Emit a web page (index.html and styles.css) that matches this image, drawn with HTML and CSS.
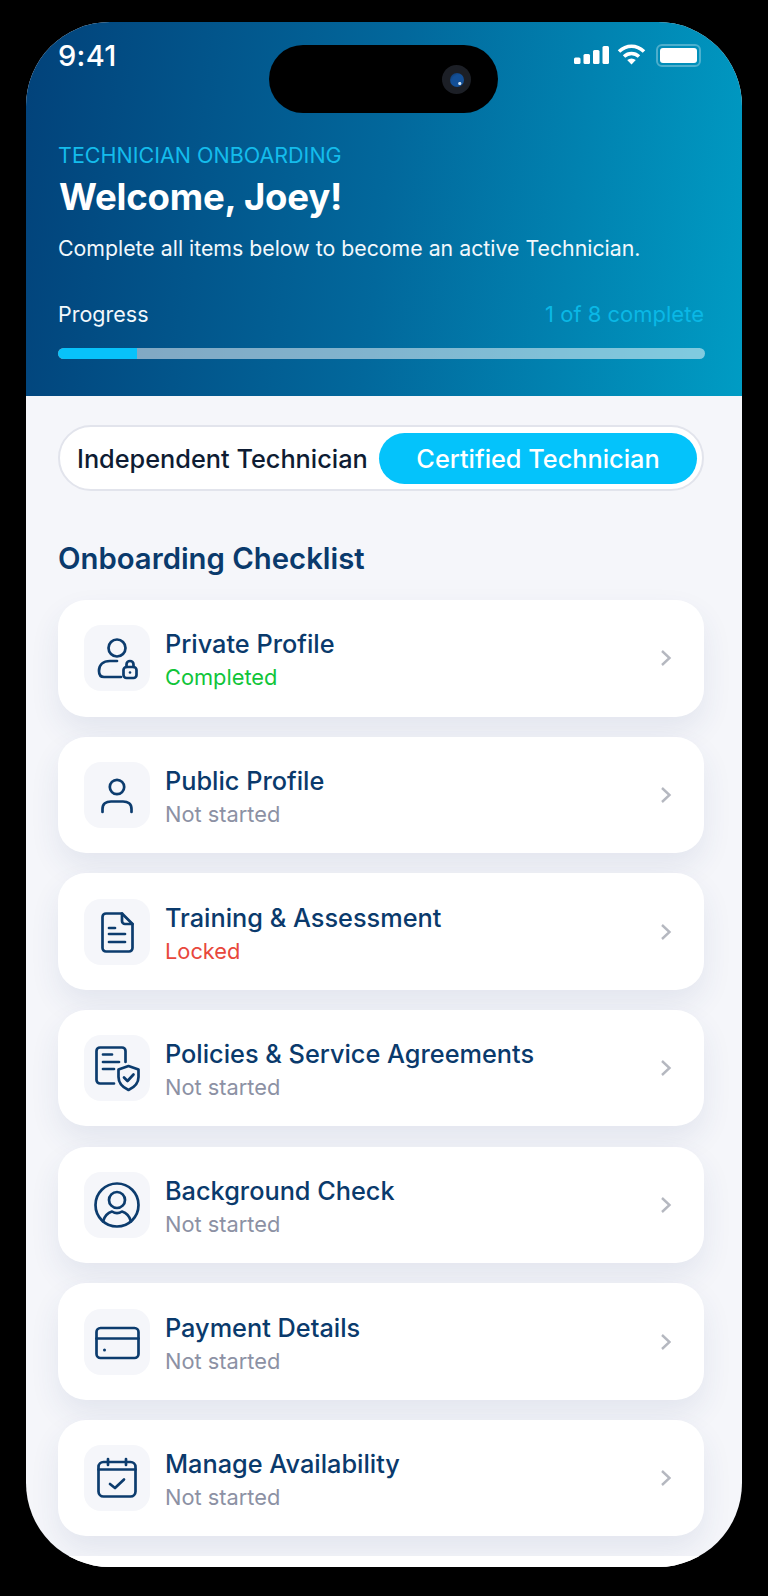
FILE: index.html
```html
<!DOCTYPE html>
<html lang="en">
<head>
<meta charset="utf-8">
<title>Technician Onboarding</title>
<link rel="stylesheet" href="styles.css">
</head>
<body>
<div class="phone">
  <header class="hero">
    <div class="status">
      <span class="time">9:41</span>
      <div class="status-icons">
        <svg class="sig" width="35" height="18" viewBox="0 0 35 18"><rect x="0" y="11.5" width="6.5" height="6.5" rx="1.5"/><rect x="9.5" y="8" width="6.5" height="10" rx="1.5"/><rect x="19" y="4" width="6.5" height="14" rx="1.5"/><rect x="28.5" y="0" width="6.5" height="18" rx="1.5"/></svg>
        <svg class="wifi" width="29" height="21" viewBox="0 0 29 21"><path d="M2 7.5C9.5 .5 19.5 .5 27 7.5" /><path d="M7 12.5C11.5 8.5 17.5 8.5 22 12.5"/><path class="wifi-dot" d="M14.5 20.5L10.2 16C13 14 16 14 18.8 16Z"/></svg>
        <div class="battery"><span class="battery-fill"></span></div>
      </div>
    </div>
    <div class="island"><span class="camera"><span class="lens"></span></span></div>
    <p class="eyebrow">TECHNICIAN ONBOARDING</p>
    <h1 class="welcome">Welcome, Joey!</h1>
    <p class="lead">Complete all items below to become an active Technician.</p>
    <div class="progress-row">
      <span>Progress</span>
      <span class="progress-count">1 of 8 complete</span>
    </div>
    <div class="bar"><span class="bar-fill"></span></div>
  </header>

  <main class="body">
    <div class="segment">
      <span class="seg-off">Independent Technician</span>
      <span class="seg-on">Certified Technician</span>
    </div>
    <h2 class="section">Onboarding Checklist</h2>
    <div class="list">
      <article class="card">
        <div class="icon"><svg viewBox="0 0 66 66"><circle cx="33" cy="23" r="8.5"/><path d="M33 36H26C19 36 15 40 15 46Q15 52 20 52H37"/><rect x="39.5" y="42" width="13" height="11" rx="3"/><path d="M42.500 42V39.500a3.500 3.500 0 0 1 7 0V42"/><circle class="solid" cx="46" cy="47.500" r="1.300"/></svg></div>
        <div class="text"><div class="title">Private Profile</div><div class="sub done">Completed</div></div>
        <svg class="chev" viewBox="0 0 12 18"><path d="M2 2l7.500 7-7.500 7"/></svg>
      </article>
      <article class="card">
        <div class="icon"><svg viewBox="0 0 66 66"><circle cx="33" cy="25" r="7.200"/><path d="M18.500 50V47C18.500 42 22 39.500 27 39.500H39C44 39.500 47.500 42 47.500 47V50"/></svg></div>
        <div class="text"><div class="title">Public Profile</div><div class="sub">Not started</div></div>
        <svg class="chev" viewBox="0 0 12 18"><path d="M2 2l7.500 7-7.500 7"/></svg>
      </article>
      <article class="card">
        <div class="icon"><svg viewBox="0 0 66 66"><path d="M22 14.500H38L48.500 25V49a3.500 3.500 0 0 1-3.500 3.500H22a3.500 3.500 0 0 1-3.500-3.500V18a3.500 3.500 0 0 1 3.500-3.500Z"/><path d="M38 14.500V22a3 3 0 0 0 3 3H48.500"/><path d="M25 29H31M25 35H41M25 43H41"/></svg></div>
        <div class="text"><div class="title">Training &amp; Assessment</div><div class="sub lock">Locked</div></div>
        <svg class="chev" viewBox="0 0 12 18"><path d="M2 2l7.500 7-7.500 7"/></svg>
      </article>
      <article class="card">
        <div class="icon"><svg viewBox="0 0 66 66"><path d="M30 48.500H16a3.500 3.500 0 0 1-3.500-3.500V16a3.500 3.500 0 0 1 3.500-3.500H38a3.500 3.500 0 0 1 3.500 3.500V27"/><path d="M19 19.500H28M19 27H35M19 34H30"/><path d="M44.500 31L54.500 34.500V42C54.500 48 50 52.500 44.500 55C39 52.500 34.500 48 34.500 42V34.500Z"/><path d="M40 42.500L43.500 46L49.500 39.500"/></svg></div>
        <div class="text"><div class="title">Policies &amp; Service Agreements</div><div class="sub">Not started</div></div>
        <svg class="chev" viewBox="0 0 12 18"><path d="M2 2l7.500 7-7.500 7"/></svg>
      </article>
      <article class="card">
        <div class="icon"><svg viewBox="0 0 66 66"><circle cx="33" cy="33" r="21.500"/><circle cx="33" cy="28" r="8"/><path d="M19 49.500C20.500 44 24.500 40.500 28 39.500C31 41.500 35 41.500 38 39.500C41.500 40.500 45.500 44 47 49.500"/></svg></div>
        <div class="text"><div class="title">Background Check</div><div class="sub">Not started</div></div>
        <svg class="chev" viewBox="0 0 12 18"><path d="M2 2l7.500 7-7.500 7"/></svg>
      </article>
      <article class="card">
        <div class="icon"><svg viewBox="0 0 66 66"><rect x="12.500" y="19" width="42" height="30" rx="4"/><path d="M12.500 29.500H54.500"/><circle class="solid" cx="20.500" cy="41" r="1.500"/></svg></div>
        <div class="text"><div class="title">Payment Details</div><div class="sub">Not started</div></div>
        <svg class="chev" viewBox="0 0 12 18"><path d="M2 2l7.500 7-7.500 7"/></svg>
      </article>
      <article class="card">
        <div class="icon"><svg viewBox="0 0 66 66"><rect x="14.500" y="17" width="37" height="34.500" rx="5"/><path d="M14.500 24.500H51.500M24 14V20M42 14V20"/><path d="M26 39L31 43L40 34.500"/></svg></div>
        <div class="text"><div class="title">Manage Availability</div><div class="sub">Not started</div></div>
        <svg class="chev" viewBox="0 0 12 18"><path d="M2 2l7.500 7-7.500 7"/></svg>
      </article>
    </div>
    <div class="foot"></div>
  </main>
</div>
</body>
</html>
```

FILE: styles.css
```css
* { box-sizing: border-box; }
html, body { margin: 0; padding: 0; background: #000; }
body { width: 768px; height: 1596px; padding: 22px 26px 0; font-family: Inter, "Liberation Sans", sans-serif; overflow: hidden; }

.phone { width: 716px; height: 1545px; border-radius: 84px; overflow: hidden; background: #f5f6fa; display: flex; flex-direction: column; }

.hero { position: relative; height: 374px; padding: 21px 38px 0 32px; color: #fff; background: linear-gradient(97deg, #02427a 0%, #02689c 50%, #009cc4 100%); flex: none; }

.status { display: flex; justify-content: space-between; align-items: flex-start; height: 36px; }
.time { font-size: 29px; line-height: 26px; font-weight: 500; letter-spacing: .3px; }
.status-icons { display: flex; align-items: flex-start; margin-top: 3px; margin-right: 3px; }
.sig { fill: #fff; margin-right: 8px; }
.wifi { margin-right: 10px; margin-top: -2px; fill: none; stroke: #fff; stroke-width: 3.6; }
.wifi-dot { fill: #fff; stroke: none; }
.battery { width: 45px; height: 23px; margin-top: -2px; border: 2px solid rgba(255,255,255,.3); border-radius: 6px; padding: 2px; }
.battery-fill { display: block; width: 100%; height: 100%; background: #fff; border-radius: 3px; }

.island { position: absolute; left: 243px; top: 23px; width: 229px; height: 68px; background: #000; border-radius: 34px; }
.camera { position: absolute; left: 173px; top: 20px; width: 29px; height: 29px; border-radius: 50%; background: #1c1f26; display: flex; align-items: center; justify-content: center; }
.lens { width: 14px; height: 14px; border-radius: 50%; background: radial-gradient(circle at 70% 75%, #cfe0f0 0 8%, #134f96 14% 60%, #0d2f5c 100%); }

.eyebrow { margin: 62px 0 0; font-size: 21.500px; line-height: 28px; color: #14bcec; }
.welcome { margin: 7px 0 0 1px; font-size: 36.600px; line-height: 42px; font-weight: 700; letter-spacing: -.2px; }
.lead { margin: 16px 0 0; font-size: 21.300px; line-height: 28px; color: #f2f8fc; }
.progress-row { display: flex; justify-content: space-between; margin-top: 38px; font-size: 21.500px; line-height: 28px; color: #f2f8fc; }
.progress-count { color: #0ab8e6; font-size: 22px; }
.bar { height: 11px; margin-top: 20px; width: 647px; border-radius: 6px; background: rgba(255,255,255,.5); overflow: hidden; }
.bar-fill { display: block; width: 79px; height: 100%; background: #08c2fa; border-radius: 6px 0 0 6px; }

.body { flex: 1; padding: 29px 38px 0 32px; display: flex; flex-direction: column; min-height: 0; }

.segment { height: 66px; border: 2px solid #e2e4ec; border-radius: 33px; background: #fff; display: flex; align-items: center; justify-content: space-between; padding: 0 5px 0 17px; flex: none; }
.seg-off { font-size: 25.300px; font-weight: 500; color: #0e1c33; }
.seg-on { width: 318px; height: 51px; border-radius: 26px; background: #04c3fb; color: #fff; font-size: 25.300px; font-weight: 500; display: flex; align-items: center; justify-content: center; }

.section { margin: 50px 0 0; font-size: 29.300px; line-height: 36px; font-weight: 600; color: #0a3a6c; flex: none; }

.list { display: flex; flex-direction: column; gap: 20.17px; margin-top: 23px; flex: none; }
.card { height: 116.500px; background: #fff; border-radius: 28px; padding: 0 32px 0 26px; display: flex; align-items: center; box-shadow: 0 14px 30px rgba(40,70,120,.09); }
.icon { width: 66px; height: 66px; border-radius: 17px; background: #f5f6fa; flex: none; }
.icon svg { display: block; width: 66px; height: 66px; fill: none; stroke: #0c3c6e; stroke-width: 2.7; stroke-linecap: round; stroke-linejoin: round; }
.icon svg .solid { fill: #0c3c6e; stroke: none; }
.text { margin: 3px 0 0 15px; flex: 1; }
.title { font-size: 25.300px; line-height: 32px; font-weight: 500; color: #0a3a6c; }
.sub { font-size: 21.800px; line-height: 28px; margin-top: 3px; color: #8c91a4; }
.done { color: #10c53a; }
.lock { color: #e8473c; }
.chev { width: 12px; height: 18px; fill: none; stroke: #b5b8c0; stroke-width: 2.4; flex: none; }

.foot { margin: 20px -38px 0 -32px; height: 14px; background: #fff; flex: none; }
```
